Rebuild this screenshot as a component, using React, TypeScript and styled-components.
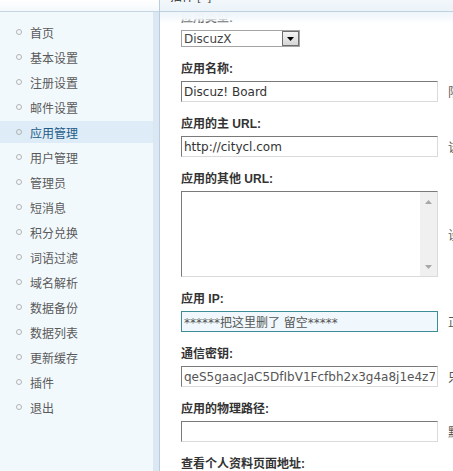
import styled, { createGlobalStyle } from "styled-components";

const GlobalStyle = createGlobalStyle`
    html, body {
        margin: 0;
        padding: 0;
        overflow: hidden;
        background: #fff;
    }
    body {
        font-family: "Liberation Sans", "Noto Sans CJK SC", sans-serif;
        font-size: 12px;
    }
`;

const menu = [
    "首页", "基本设置", "注册设置", "邮件设置", "应用管理", "用户管理",
    "管理员", "短消息", "积分兑换", "词语过滤", "域名解析", "数据备份",
    "数据列表", "更新缓存", "插件", "退出",
];

const fields = [
    { label: "应用名称:", value: "Discuz! Board", hint: "限 20 字节。" },
    { label: "应用的主 URL:", value: "http://citycl.com", hint: "该应用的首页地址" },
];

const lower = [
    { label: "应用 IP:", value: "******把这里删了 留空*****", hint: "正常情况下留空即可", focus: true },
    { label: "通信密钥:", value: "qeS5gaacJaC5DfIbV1Fcfbh2x3g4a8j1e4z7W2", hint: "只允许使用英文字母及数字", muted: true },
    { label: "应用的物理路径:", value: "", hint: "默认为空，如果填写的为相对路径" },
];

const Arrow = ({ up }: { up?: boolean }) => (
    <svg width="7" height="4" viewBox="0 0 7 4">
        <path d={up ? "M0 4 L3.5 0 L7 4 Z" : "M0 0 L3.5 4 L7 0 Z"} fill="#a8a8a8" />
    </svg>
);

export default function App() {
    return (
        <>
            <GlobalStyle />
            <Page>
                <Sidebar>
                    <SideHead />
                    <Menu>
                        {menu.map((item) => (
                            <MenuItem key={item} $active={item === "应用管理"}>
                                <Bullet />
                                {item}
                            </MenuItem>
                        ))}
                    </Menu>
                </Sidebar>
                <Main>
                    <MainHead>
                        <HeadText>插件 [+]</HeadText>
                    </MainHead>
                    <HeadShade />
                    <Form>
                        <Field>
                            <Label>应用类型:</Label>
                            <SelectBox>
                                <SelectText>DiscuzX</SelectText>
                                <SelectButton>
                                    <svg width="7" height="4" viewBox="0 0 7 4">
                                        <path d="M0 0 L3.5 4 L7 0 Z" fill="#000" />
                                    </svg>
                                </SelectButton>
                            </SelectBox>
                        </Field>
                        {fields.map((f) => (
                            <Field key={f.label}>
                                <Label>{f.label}</Label>
                                <Row>
                                    <TextInput defaultValue={f.value} />
                                    <Hint>{f.hint}</Hint>
                                </Row>
                            </Field>
                        ))}
                        <Field>
                            <Label>应用的其他 URL:</Label>
                            <Row>
                                <AreaBox>
                                    <Area />
                                    <ScrollTrack>
                                        <Arrow up />
                                        <Arrow />
                                    </ScrollTrack>
                                </AreaBox>
                                <Hint>设置该应用的其他访问地址</Hint>
                            </Row>
                        </Field>
                        {lower.map((f) => (
                            <Field key={f.label}>
                                <Label>{f.label}</Label>
                                <Row>
                                    <TextInput defaultValue={f.value} $focus={f.focus} $muted={f.muted} />
                                    <Hint>{f.hint}</Hint>
                                </Row>
                            </Field>
                        ))}
                        <Field>
                            <Label>查看个人资料页面地址:</Label>
                        </Field>
                    </Form>
                </Main>
            </Page>
        </>
    );
}

const Page = styled.div`
    display: flex;
    width: 453px;
    height: 471px;
    overflow: hidden;
`;

const Sidebar = styled.div`
    width: 159px;
    flex-shrink: 0;
    display: flex;
    flex-direction: column;
`;

const SideHead = styled.div`
    height: 11px;
    border-bottom: 1px solid #c4d6e4;
    background: linear-gradient(#ffffff, #f5f9fc);
`;

const Menu = styled.ul`
    flex: 1;
    list-style: none;
    margin: 0;
    padding: 9px 0 0;
    background: #f2f9fd;
    border-right: 6px solid #dbe8f3;
`;

const MenuItem = styled.li<{ $active?: boolean }>`
    height: 22px;
    margin-bottom: 3px;
    display: flex;
    align-items: center;
    padding-left: 16px;
    font-family: "Noto Sans CJK SC", sans-serif;
    font-size: 12px;
    color: ${({ $active }) => ($active ? "#1f5b87" : "#5a5a5a")};
    background: ${({ $active }) => ($active ? "#ddecf7" : "transparent")};
`;

const Bullet = styled.span`
    width: 6px;
    height: 6px;
    box-sizing: border-box;
    border: 1px solid #b3b3b3;
    border-radius: 50%;
    margin-right: 8px;
`;

const Main = styled.div`
    flex: 1;
    position: relative;
    display: flex;
    flex-direction: column;
    border-left: 1px solid #b8cedf;
    overflow: hidden;
`;

const MainHead = styled.div`
    height: 11px;
    flex-shrink: 0;
    border-bottom: 1px solid #bdd2e2;
    background: linear-gradient(#f2f7fb, #ebf3f9);
    padding-left: 10px;
    overflow: hidden;
    position: relative;
    z-index: 3;
`;

const HeadText = styled.div`
    margin-top: -11px;
    line-height: 14px;
    color: #333;
    font-family: "Noto Sans CJK SC", sans-serif;
`;

const HeadShade = styled.div`
    position: absolute;
    top: 12px;
    left: 0;
    right: 0;
    height: 12px;
    z-index: 2;
    background: linear-gradient(
        rgba(238, 245, 250, 1) 0%,
        rgba(246, 250, 253, 0.97) 55%,
        rgba(255, 255, 255, 0) 100%
    );
`;

const Form = styled.div`
    margin-top: -2px;
    padding-left: 21px;
`;

const Field = styled.div`
    margin-bottom: 14px;
`;

const Label = styled.div`
    height: 16px;
    line-height: 16px;
    margin-bottom: 4px;
    font-weight: bold;
    color: #333;
    white-space: nowrap;
`;

const Row = styled.div`
    display: flex;
    align-items: center;
    gap: 10px;
`;

const TextInput = styled.input<{ $focus?: boolean; $muted?: boolean }>`
    width: 257px;
    height: 21px;
    flex-shrink: 0;
    box-sizing: border-box;
    margin: 0;
    padding: 0 2px;
    border-width: 1px;
    border-style: solid;
    border-color: ${({ $focus }) =>
        $focus ? "#3d8d96" : "#7a7a7a #dadada #dadada #7a7a7a"};
    background-color: ${({ $focus }) => ($focus ? "#f0f8fd" : "#fff")};
    font-family: "DejaVu Sans", "Noto Sans CJK SC", sans-serif;
    font-size: 12px;
    color: ${({ $focus, $muted }) => ($focus || $muted ? "#555" : "#333")};
    outline: none;
`;

const Hint = styled.span`
    white-space: nowrap;
    color: #555;
    font-family: "Noto Sans CJK SC", sans-serif;
`;

const SelectBox = styled.div`
    width: 119px;
    height: 17px;
    box-sizing: border-box;
    border: 1px solid #a4a4a4;
    display: flex;
    align-items: center;
    justify-content: space-between;
    background: #fff;
`;

const SelectText = styled.span`
    padding-left: 2px;
    font-family: "DejaVu Sans", sans-serif;
    font-size: 12px;
    color: #444;
`;

const SelectButton = styled.span`
    width: 17px;
    height: 15px;
    box-sizing: border-box;
    border: 1px solid #6e6e6e;
    background: linear-gradient(#f4f4f4, #d6d6d6);
    display: flex;
    align-items: center;
    justify-content: center;
`;

const AreaBox = styled.div`
    width: 257px;
    height: 86px;
    flex-shrink: 0;
    box-sizing: border-box;
    border: 1px solid;
    border-color: #7a7a7a #dadada #dadada #7a7a7a;
    display: flex;
    background: #fff;
`;

const Area = styled.textarea`
    flex: 1;
    border: none;
    resize: none;
    outline: none;
    margin: 0;
    padding: 2px;
`;

const ScrollTrack = styled.div`
    width: 17px;
    background: #f0f0f0;
    display: flex;
    flex-direction: column;
    align-items: center;
    justify-content: space-between;
    padding: 8px 0 7px;
`;
